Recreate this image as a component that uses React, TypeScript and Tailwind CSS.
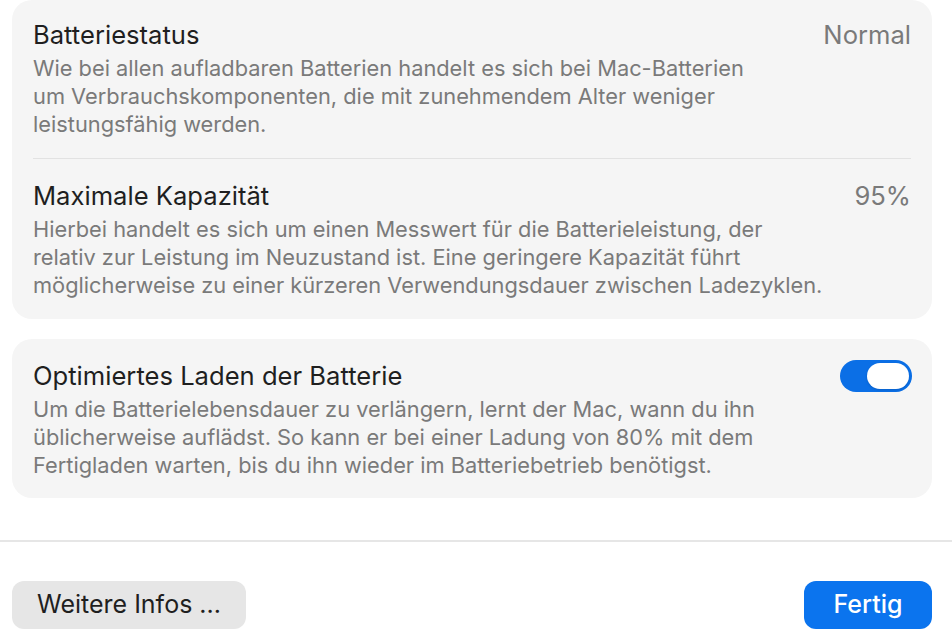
import React from 'react';

const font = { fontFamily: 'Inter, "Noto Sans", sans-serif' };

function Desc({ lines }: { lines: string[] }) {
  return (
    <div className="mt-[4px] text-[21.8px] leading-[28px] text-[#7a7a7a]">
      {lines.map((l) => (
        <div key={l}>{l}</div>
      ))}
    </div>
  );
}

function Row({ title, value, lines }: { title: string; value?: string; lines: string[] }) {
  return (
    <div>
      <div className="flex items-center justify-between">
        <div className="text-[25.6px] leading-[30px] text-[#1f1f1f]">{title}</div>
        {value && <div className="text-[25.6px] leading-[30px] text-[#7a7a7a]">{value}</div>}
      </div>
      <Desc lines={lines} />
    </div>
  );
}

export default function App() {
  return (
    <div className="w-[952px] h-[640px] bg-white overflow-hidden" style={font}>
      <div className="pl-[12px] pr-[20px]">
        <div className="rounded-[20px] bg-[#f5f5f5] pl-[21px] pr-[21px] pt-[20px] pb-[20px]">
          <Row
            title="Batteriestatus"
            value="Normal"
            lines={[
              'Wie bei allen aufladbaren Batterien handelt es sich bei Mac-Batterien',
              'um Verbrauchskomponenten, die mit zunehmendem Alter weniger',
              'leistungsfähig werden.',
            ]}
          />
          <div className="mt-[20px] mb-[22px] h-px bg-[#e2e2e2]" />
          <Row
            title="Maximale Kapazität"
            value="95%"
            lines={[
              'Hierbei handelt es sich um einen Messwert für die Batterieleistung, der',
              'relativ zur Leistung im Neuzustand ist. Eine geringere Kapazität führt',
              'möglicherweise zu einer kürzeren Verwendungsdauer zwischen Ladezyklen.',
            ]}
          />
        </div>

        <div className="mt-[20px] rounded-[20px] bg-[#f5f5f5] pl-[21px] pr-[20px] pt-[22px] pb-[19px]">
          <div className="flex items-start justify-between">
            <div>
              <div className="text-[25.6px] leading-[30px] text-[#1f1f1f]">Optimiertes Laden der Batterie</div>
              <Desc
                lines={[
                  'Um die Batterielebensdauer zu verlängern, lernt der Mac, wann du ihn',
                  'üblicherweise auflädst. So kann er bei einer Ladung von 80% mit dem',
                  'Fertigladen warten, bis du ihn wieder im Batteriebetrieb benötigst.',
                ]}
              />
            </div>
            <div className="mt-[-1px] flex h-[32px] w-[72px] items-center justify-end rounded-full bg-[#0b6fe6] px-[3px]">
              <div className="h-[26px] w-[42px] rounded-full bg-white shadow-sm" />
            </div>
          </div>
        </div>
      </div>

      <div className="mt-[42px] h-[2px] bg-[#e6e6e6]" />

      <div className="flex justify-between pl-[12px] pr-[20px] pt-[39px]">
        <button className="h-[48px] w-[234px] rounded-[12px] bg-[#e6e6e6] text-[25px] text-[#1f1f1f]">
          Weitere Infos ...
        </button>
        <button className="h-[48px] w-[128px] rounded-[12px] bg-[#0b74ee] text-[25px] font-medium text-white">
          Fertig
        </button>
      </div>
    </div>
  );
}
